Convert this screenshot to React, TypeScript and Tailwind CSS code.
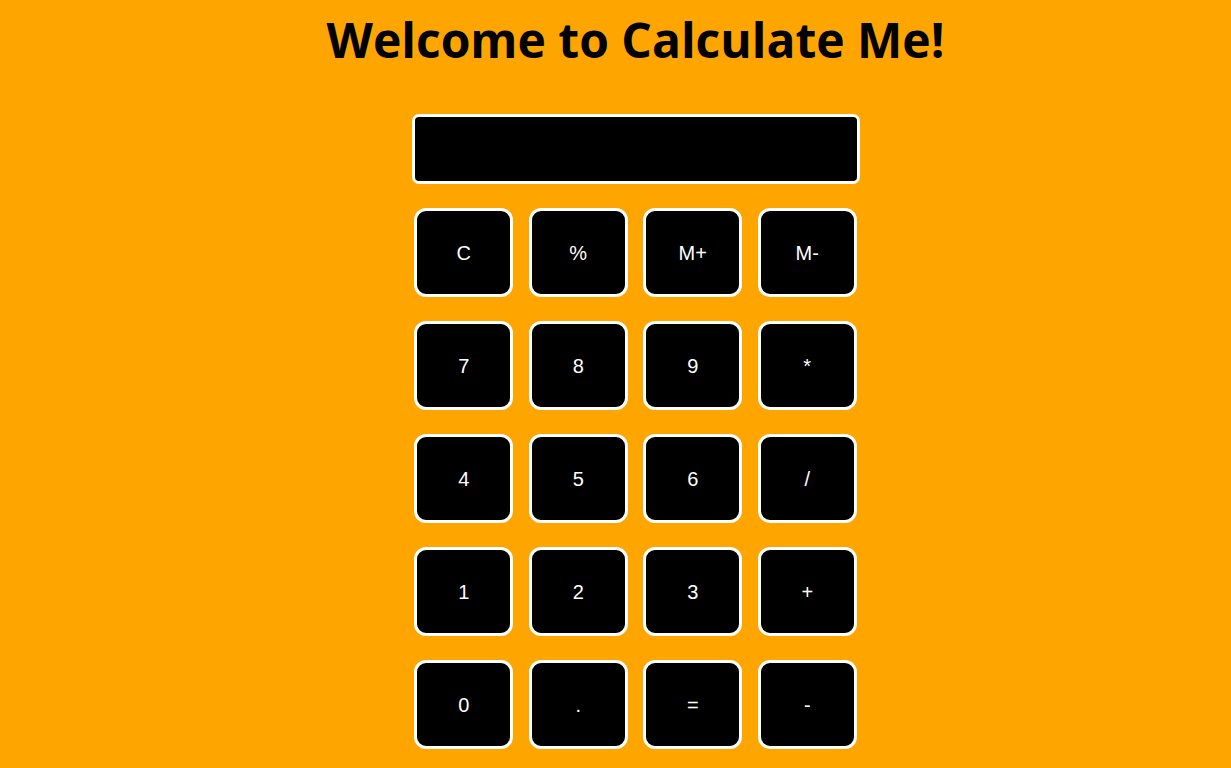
import React from 'react'

const keys = ['C', '%', 'M+', 'M-', '7', '8', '9', '*', '4', '5', '6', '/', '1', '2', '3', '+', '0', '.', '=', '-']

export default function App() {
  return (
    <div className="min-h-[768px] bg-[#ffa500] pl-[40px]">
      <h1
        className="pt-[8px] text-center text-[48px] font-bold leading-[64px] text-black"
        style={{ fontFamily: '"Open Sans", sans-serif' }}
      >
        Welcome to Calculate Me!
      </h1>
      <div className="mx-auto mt-[42px] w-[448px]">
        <div className="h-[70px] w-full rounded-[7px] border-[3px] border-white bg-black" />
        <div className="mt-[24px] grid grid-cols-[repeat(4,99px)] justify-center gap-x-[15.5px] gap-y-[24px]">
          {keys.map((k) => (
            <button
              key={k}
              className="flex h-[89px] w-[99px] items-center justify-center rounded-[12px] border-[3px] border-white bg-black text-[20px] text-white"
              style={{ fontFamily: '"Liberation Sans", Arial, sans-serif' }}
            >
              {k}
            </button>
          ))}
        </div>
      </div>
    </div>
  )
}
